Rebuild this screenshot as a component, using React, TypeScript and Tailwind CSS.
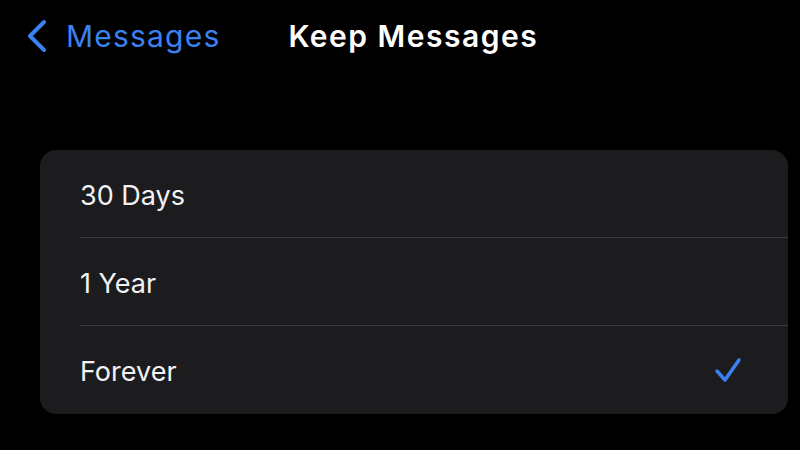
const options = ['30 Days', '1 Year', 'Forever'];

export default function App() {
  const selected = 'Forever';

  return (
    <div
      className="w-[800px] h-[450px] bg-black overflow-hidden"
      style={{ fontFamily: 'Inter, "Noto Sans", sans-serif' }}
    >
      {/* NAV BAR */}
      <div className="flex items-center h-[72px] pl-[24px]">
        <button className="flex items-center text-[#3b82f0]">
          <svg width="24" height="36" viewBox="0 0 24 36" fill="none" className="mr-[18px]">
            <path
              d="M20 4 L6 18 L20 32"
              stroke="currentColor"
              strokeWidth="4"
              strokeLinecap="round"
              strokeLinejoin="round"
            />
          </svg>
          <span className="text-[30px] tracking-[1.2px]">Messages</span>
        </button>
        <h1 className="ml-[68px] text-white text-[30px] font-semibold tracking-[1.5px]">
          Keep Messages
        </h1>
      </div>

      {/* LIST */}
      <div className="mt-[78px] ml-[40px] w-[748px] rounded-[16px] bg-[#1c1c1e] overflow-hidden">
        {options.map((opt, i) => (
          <div key={opt} className="pl-[40px]">
            <div
              className={`h-[88px] flex items-center pr-[46px] ${
                i < options.length - 1 ? 'border-b border-[#3a3a3c]' : ''
              }`}
            >
              <span className="text-[#f2f2f7] text-[27px] flex-1 pt-[5px]">{opt}</span>
              {opt === selected && (
                <svg width="29" height="27" viewBox="0 0 29 27" fill="none" className="text-[#3b82f0]">
                  <path
                    d="M4 14 L12 23 L26 3"
                    stroke="currentColor"
                    strokeWidth="3.5"
                    strokeLinecap="round"
                    strokeLinejoin="round"
                  />
                </svg>
              )}
            </div>
          </div>
        ))}
      </div>
    </div>
  );
}
